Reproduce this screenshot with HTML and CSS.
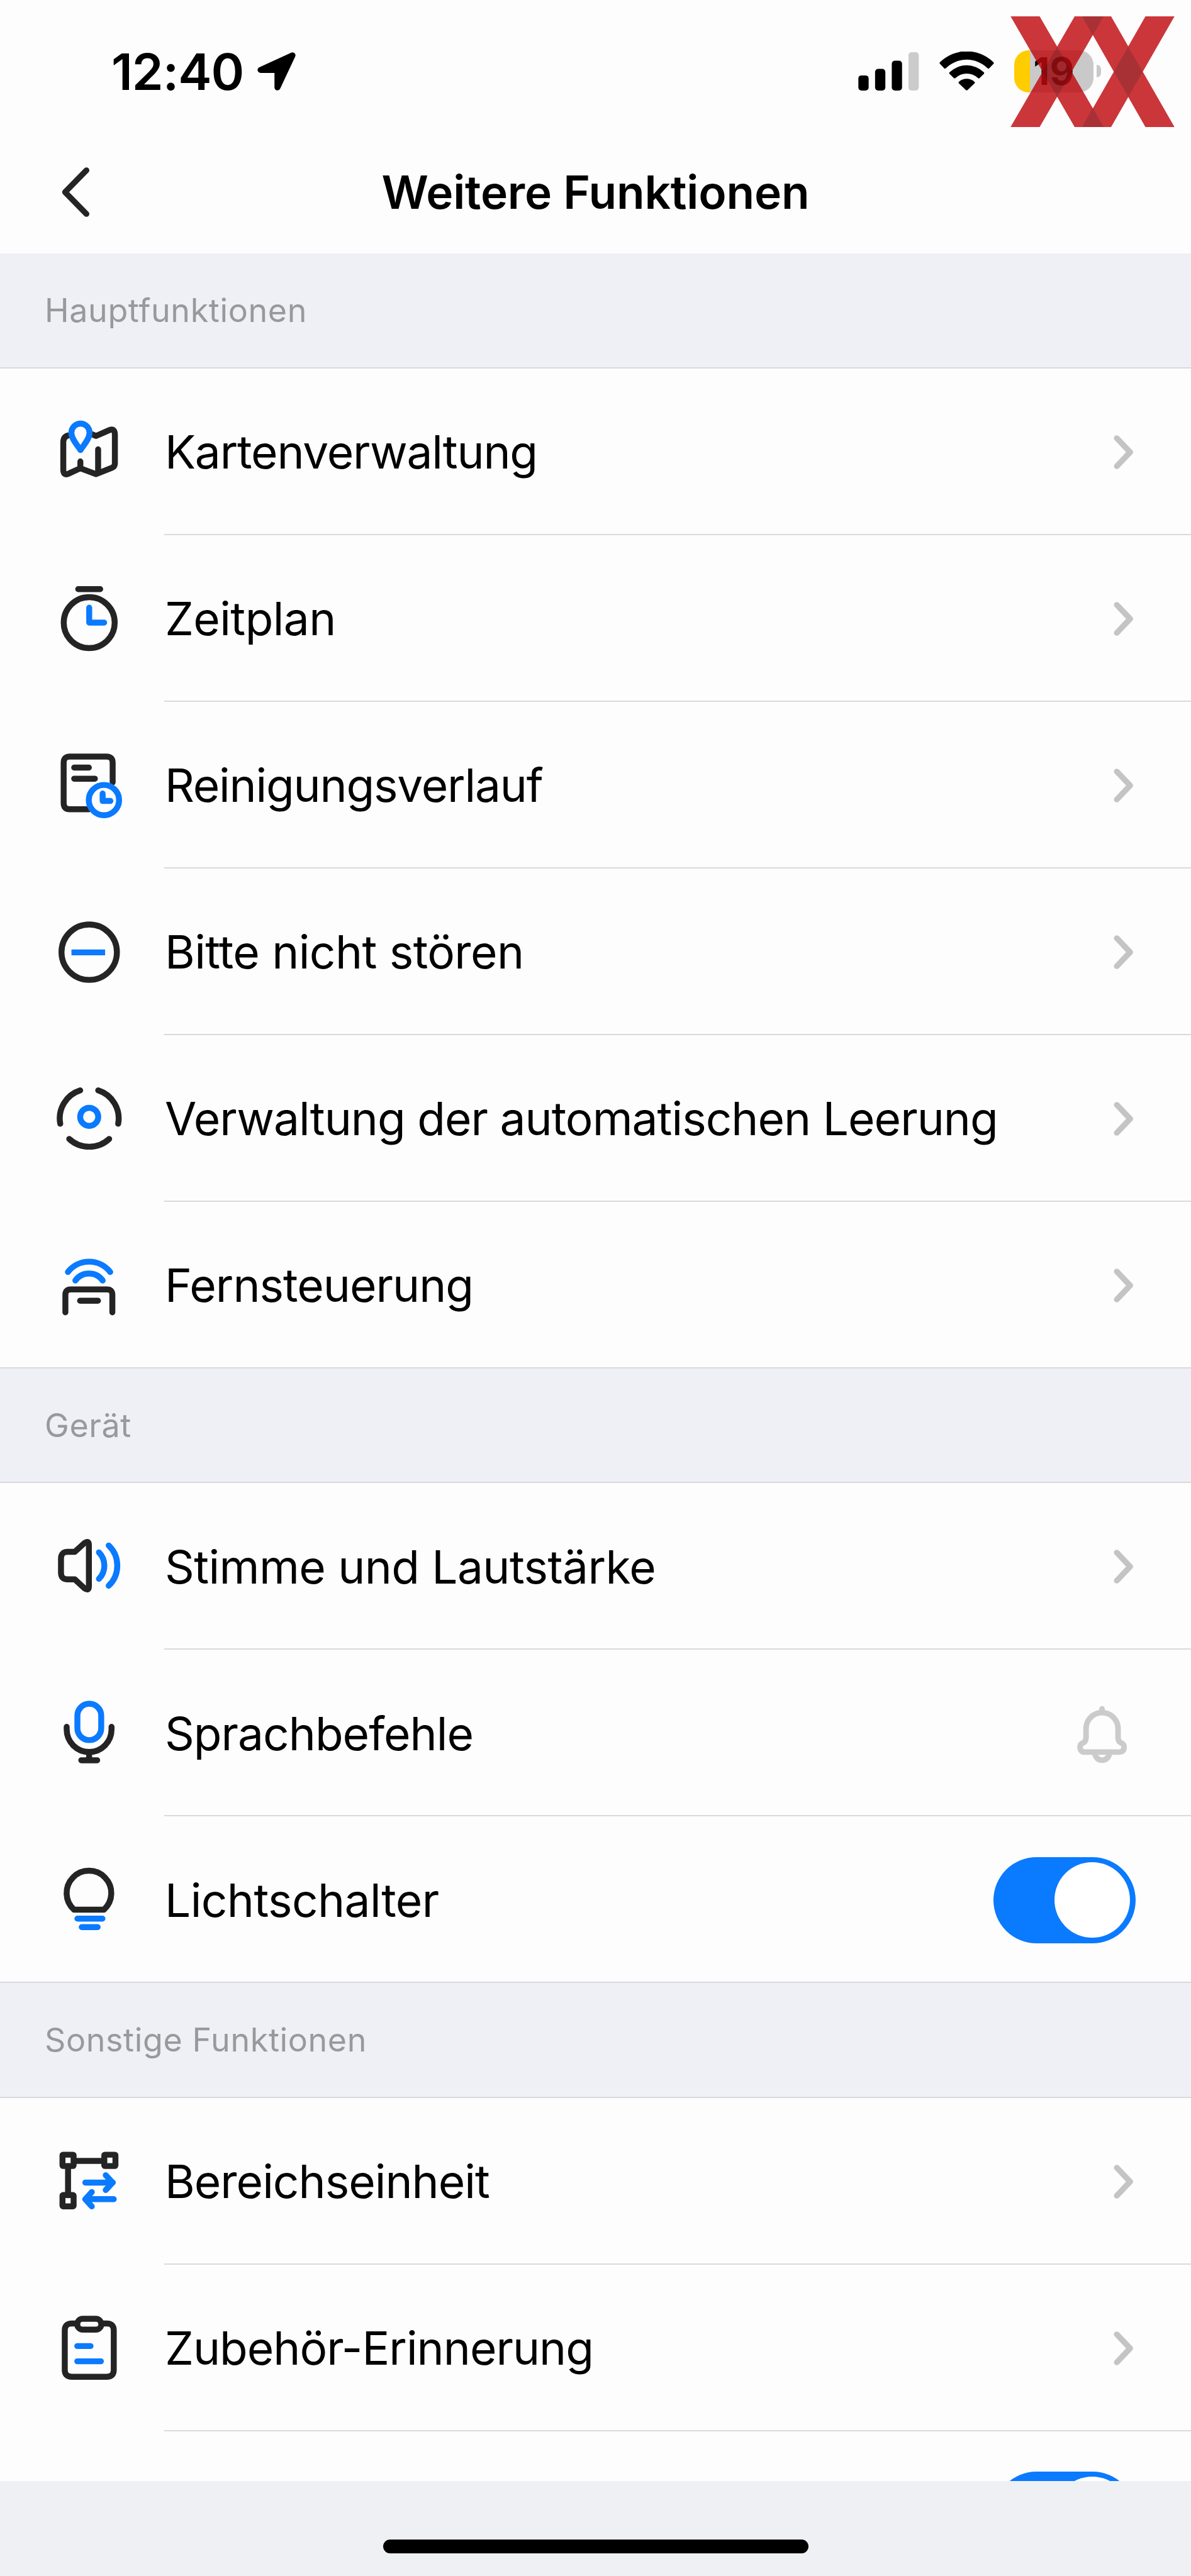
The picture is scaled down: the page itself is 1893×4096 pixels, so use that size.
FILE: index.html
```html
<!DOCTYPE html>
<html lang="de">
<head>
    <meta charset="UTF-8">
    <title>Weitere Funktionen</title>
    <link rel="stylesheet" href="styles.css">
</head>
<body>
    <!-- shared symbols -->
    <svg class="defs">
        <symbol id="chevron" viewBox="0 0 32 55">
            <path d="M4.8 4.8L26.4 27.5L4.8 50.2" fill="none" stroke="#c4c4c4" stroke-width="9.3" stroke-linecap="round" stroke-linejoin="round"/>
        </symbol>
    </svg>

    <div class="header">
        <div class="status">
            <span class="time">12:40</span>
            <svg class="location" viewBox="0 0 62 62">
                <path d="M56.8 5L5.2 28.800H32.500V57Z" stroke="#000" stroke-width="9.600" stroke-linejoin="round"/>
            </svg>
            <svg class="signal" viewBox="0 0 98 62">
                <rect x="0" y="37.5" width="16.6" height="24.5" rx="5"/>
                <rect x="27" y="27" width="16.6" height="35" rx="5"/>
                <rect x="54" y="13.7" width="16.6" height="48.3" rx="5"/>
                <rect x="81" y="0" width="16.6" height="62" rx="5" fill="#cbcbcb"/>
            </svg>
            <svg class="wifi" viewBox="0 0 88 63">
                <path d="M.8 19.8Q-.5 18.3 1 17A61.5 61.5 0 0 1 87 17Q88.500 18.300 87.200 19.800L80.500 26.900Q79.200 28.200 77.700 26.900A48 48 0 0 0 10.300 26.900Q8.800 28.200 7.500 26.900Z"/>
                <path d="M16.300 36Q15 34.700 16.500 33.300A39.500 39.500 0 0 1 71.500 33.300Q73 34.700 71.700 36L64.900 42.700Q63.600 44 62.100 42.700A26.500 26.500 0 0 0 25.900 42.700Q24.400 44 23.100 42.700Z"/>
                <path d="M31.300 51.300Q30 50 31.500 48.700A19 19 0 0 1 56.500 48.700Q58 50 56.700 51.300L45.500 62Q44 63.400 42.500 62Z"/>
            </svg>
            <div class="battery"><span>19</span></div>
            <div class="nub"></div>
        </div>
        <div class="nav">
            <svg class="back" viewBox="0 0 46 82">
                <path d="M40.300 5.500L5.500 41L40.300 76.500" fill="none" stroke="#242424" stroke-width="9.400" stroke-linecap="round" stroke-linejoin="round"/>
            </svg>
            <h1>Weitere Funktionen</h1>
        </div>
        <svg class="logo" viewBox="0 0 265 179">
            <g opacity=".82">
                <path fill="#c00a0f" d="M0 0H47L150.500 179H103.600ZM103.600 0H150.500L47 179H0ZM115.800 0H162.500L265 179H218ZM218 0H265L162.500 179H115.800Z"/>
            </g>
            <path fill="rgba(0,30,35,.17)" d="M75.300 49L98.800 89.500L75.300 130L51.800 89.500ZM190.200 49L213.700 89.500L190.200 130L166.700 89.500ZM115.800 0H150.500L132.800 31ZM115.800 179H150.500L132.800 148Z"/>
        </svg>
    </div>

    <div class="section">Hauptfunktionen</div>
    <div class="list">
        <div class="row">
            <svg class="icon" viewBox="0 0 120 120">
                <path d="M27 34Q18.900 36 18.900 45V89Q18.900 100 28 95.500L46.500 87L71.700 96.500L98 86Q102.300 84 102.300 79V33Q102.300 22 94 25L71.700 34.800L65 32"/>
                <path d="M46.500 76V87M75.200 56.500V94"/>
                <path class="blue fill" d="M46.700 57.500C41 49 32 39.500 32 29.500A14.700 14.700 0 0 1 61.400 29.500C61.400 39.500 52.400 49 46.700 57.500Z"/>
            </svg>
            <div class="cell"><span class="tight">Kartenverwaltung</span><svg class="chevron"><use href="#chevron"/></svg></div>
        </div>
        <div class="row">
            <svg class="icon" viewBox="0 0 120 120">
                <circle cx="60.800" cy="67.100" r="41.200"/>
                <path d="M43 13H78.600"/>
                <path class="blue" d="M60.800 43V67.100H85"/>
            </svg>
            <div class="cell"><span class="wide">Zeitplan</span><svg class="chevron"><use href="#chevron"/></svg></div>
        </div>
        <div class="row">
            <svg class="icon" viewBox="0 0 120 120">
                <path d="M60 99.500H29.500Q19.500 99.500 19.500 89.500V24.200Q19.500 14.200 29.500 14.200H88.700Q98.700 14.200 98.700 24.200V56"/>
                <path d="M36.500 32H60.300M36.500 50H70"/>
                <circle class="blue fill" cx="84.600" cy="84.600" r="24.500"/>
                <path class="blue" d="M82.500 74V86H95"/>
            </svg>
            <div class="cell"><span class="tight">Reinigungsverlauf</span><svg class="chevron"><use href="#chevron"/></svg></div>
        </div>
        <div class="row">
            <svg class="icon" viewBox="0 0 120 120">
                <circle cx="60.800" cy="61.100" r="44.800"/>
                <path class="blue butt" d="M32.100 61.400H86.500"/>
            </svg>
            <div class="cell"><span class="wide">Bitte nicht stören</span><svg class="chevron"><use href="#chevron"/></svg></div>
        </div>
        <div class="row">
            <svg class="icon" viewBox="0 0 120 120">
                <path d="M46.200 15A47.500 47.500 0 0 0 14 69M75.400 15A47.500 47.500 0 0 1 107.600 69M28.500 93.500A47.500 47.500 0 0 0 93.100 93.500"/>
                <circle class="blue" cx="60.800" cy="57.800" r="14.600"/>
            </svg>
            <div class="cell"><span>Verwaltung der automatischen Leerung</span><svg class="chevron"><use href="#chevron"/></svg></div>
        </div>
        <div class="row">
            <svg class="icon" viewBox="0 0 120 120">
                <path d="M22.300 104.500V76Q22.300 67.400 31 67.400H89.500Q98.200 67.400 98.200 76V104.500M46 85.700H75"/>
                <path class="blue" d="M26.400 39.200A43.300 43.300 0 0 1 94.700 39.200M38.400 53A27.300 27.300 0 0 1 82.600 53"/>
            </svg>
            <div class="cell"><span>Fernsteuerung</span><svg class="chevron"><use href="#chevron"/></svg></div>
        </div>
    </div>

    <div class="section">Gerät</div>
    <div class="list">
        <div class="row">
            <svg class="icon" viewBox="0 0 120 120">
                <path d="M26 37.200H37.500L53 23Q60.300 18 60.300 26V93Q60.300 101 53 96L37.500 81.700H26Q15.200 81.700 15.200 71V48Q15.200 37.200 26 37.200Z"/>
                <path class="blue" d="M76.500 38A30.400 30.400 0 0 1 76.500 80.800M92.300 26.800A45.200 45.200 0 0 1 92.300 92"/>
            </svg>
            <div class="cell"><span class="wide">Stimme und Lautstärke</span><svg class="chevron"><use href="#chevron"/></svg></div>
        </div>
        <div class="row">
            <svg class="icon" viewBox="0 0 120 120">
                <rect class="blue" x="41.700" y="13.300" width="38.500" height="58.800" rx="19.200"/>
                <path d="M24.400 50.600V55A36.250 36.250 0 0 0 96.900 55V50.600M60.700 92V104M48 104.700H73.700"/>
            </svg>
            <div class="cell">
                <span>Sprachbefehle</span>
                <svg class="bell" viewBox="0 0 120 120">
                    <path d="M33.700 50.500A25.900 25.900 0 0 1 85.500 50.500V65Q85.500 71.500 90.500 73.500Q95.500 76 95.300 80.500Q95 88.400 87 88.400H32Q24.200 88.400 24 80.500Q23.800 76 28.700 73.500Q33.700 71.500 33.700 65Z"/>
                    <path d="M47.500 89.500Q50 101.500 59.600 101.500Q69.500 101.500 72 89.500M59.600 18.500V20"/>
                </svg>
            </div>
        </div>
        <div class="row">
            <svg class="icon" viewBox="0 0 120 120">
                <path d="M36.200 76.700A36.100 36.100 0 1 1 84.600 76.700Z"/>
                <path class="blue" d="M41.700 91.300H82.200M48.700 105H74.500"/>
            </svg>
            <div class="cell"><span class="wide">Lichtschalter</span><div class="switch"></div></div>
        </div>
    </div>

    <div class="section">Sonstige Funktionen</div>
    <div class="list last">
        <div class="row">
            <svg class="icon" viewBox="0 0 120 120">
                <path d="M36 27.500H85M26.600 36V83"/>
                <rect x="17.600" y="17.400" width="18" height="18.300" rx="1"/>
                <rect x="85.200" y="17.400" width="18" height="18.300" rx="1"/>
                <rect x="17.600" y="82.700" width="18" height="18.300" rx="1"/>
                <path class="blue" d="M54.500 62.500H99M87.500 50.500L98.500 62.500L87.500 74.500M100.500 89.300H56M65 77.800L54.500 89.300L65 101"/>
            </svg>
            <div class="cell"><span>Bereichseinheit</span><svg class="chevron"><use href="#chevron"/></svg></div>
        </div>
        <div class="row">
            <svg class="icon" viewBox="0 0 120 120">
                <path d="M41 20.800H33Q21.300 20.800 21.300 32V96Q21.300 107 33 107H89Q100.500 107 100.500 96V32Q100.500 20.800 89 20.800H81"/>
                <rect x="41.500" y="13.200" width="38.800" height="17.600" rx="8.700"/>
                <path class="blue" d="M41.500 57.300H63M41.500 82H79.700"/>
            </svg>
            <div class="cell"><span>Zubehör-Erinnerung</span><svg class="chevron"><use href="#chevron"/></svg></div>
        </div>
        <div class="row">
            <div class="icon"></div>
            <div class="cell"><span></span><div class="switch"></div></div>
        </div>
    </div>

    <div class="footer"><div class="home"></div></div>
</body>
</html>
```

FILE: styles.css
```css
*{
    margin: 0;
    padding: 0;
    box-sizing: border-box;
}
body{
    width: 1893px;
    height: 4096px;
    overflow: hidden;
    background-color: #fdfdfd;
    font-family: Inter, "Liberation Sans", sans-serif;
    color: #000;
}
.defs{
    display: none;
}

/* header */
.header{
    position: relative;
    height: 403px;
}
.status{
    display: flex;
    align-items: center;
    height: 226px;
    padding: 0 143px 0 177px;
}
.time{
    width: 232px;
    font-size: 80px;
    font-weight: 600;
    letter-spacing: -1px;
    white-space: nowrap;
}
.location{
    width: 61px;
    height: 61px;
}
.signal{
    width: 97px;
    height: 61px;
    margin-left: auto;
}
.wifi{
    width: 87px;
    height: 62px;
    margin: 0 32px 0 32px;
}
.battery{
    width: 126px;
    height: 67px;
    border-radius: 23px;
    background: linear-gradient(to right, #ffcc00 25px, #c9c9c9 25px);
    font-size: 60px;
    font-weight: 700;
    line-height: 67px;
    text-align: center;
}
.nub{
    width: 7px;
    height: 20px;
    margin-left: 5px;
    border-radius: 0 7px 7px 0;
    background-color: #c9c9c9;
}
.logo{
    position: absolute;
    top: 26px;
    left: 1606px;
    width: 261px;
    height: 176px;
}
.nav{
    display: flex;
    align-items: center;
    height: 158px;
    padding: 0 98px;
}
.back{
    width: 45px;
    height: 81px;
}
.nav h1{
    flex: 1;
    margin-right: 45px;
    font-size: 73px;
    font-weight: 600;
    letter-spacing: -0.2px;
    text-align: center;
}

/* section titles */
.section{
    height: 182.5px;
    padding-left: 71px;
    border-bottom: 2px solid #d9dade;
    background-color: #eff0f5;
    color: #98999d;
    font-size: 52px;
    letter-spacing: 0.6px;
    line-height: 181px;
}

/* rows */
.row{
    display: flex;
    height: 265px;
    padding-left: 82px;
}
.icon{
    width: 118px;
    height: 118px;
    margin: 73px 61px 0 0;
    fill: none;
    stroke: #242424;
    stroke-width: 9.6;
    stroke-linecap: round;
    stroke-linejoin: round;
}
.icon .blue{
    stroke: #0a7aff;
}
.icon .fill{
    fill: #fdfdfd;
}
.icon .butt{
    stroke-linecap: butt;
}
.cell{
    display: flex;
    flex: 1;
    align-items: center;
    justify-content: space-between;
    padding: 3px 88px 0 1px;
    border-bottom: 2px solid #dadadc;
    font-size: 73px;
    letter-spacing: -1px;
    white-space: nowrap;
}
.cell .tight{
    letter-spacing: -1.2px;
}
.cell .wide{
    letter-spacing: -0.6px;
}
.row:last-child{
    border-bottom: 2px solid #d9dade;
}
.row:last-child .cell{
    border-bottom: 0;
}
.chevron{
    width: 32px;
    height: 54px;
    margin-right: 3px;
}
.bell{
    width: 118px;
    height: 118px;
    margin: 3px -6px 0 0;
    fill: none;
    stroke: #cbcbcb;
    stroke-width: 9;
    stroke-linecap: round;
    stroke-linejoin: round;
}

/* switch */
.switch{
    width: 226px;
    height: 137px;
    padding: 8px 9px;
    border-radius: 69px;
    background-color: #0a7aff;
}
.switch::after{
    content: "";
    display: block;
    width: 120px;
    height: 120px;
    margin-left: auto;
    border-radius: 50%;
    background-color: #fff;
}

/* list is cut off by the bottom bar */
.last{
    height: 609.5px;
    overflow: hidden;
}
.footer{
    height: 151px;
    padding-top: 93px;
    background-color: #eff0f3;
}
.home{
    width: 676px;
    height: 22px;
    margin: 0 auto;
    border-radius: 11px;
    background-color: #000;
}
```
